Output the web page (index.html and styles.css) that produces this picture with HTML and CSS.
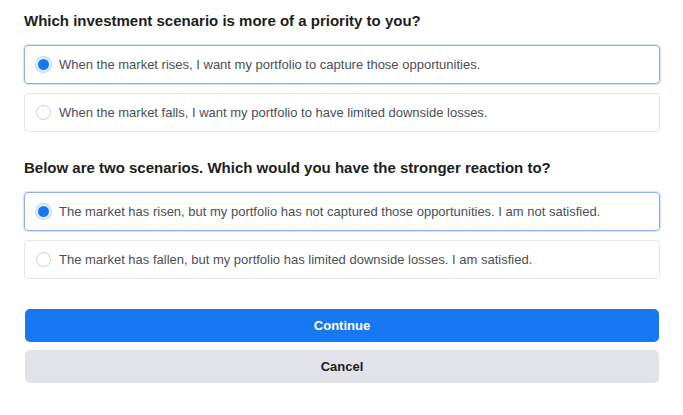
FILE: index.html
```html
<!DOCTYPE html>
<html>
  <head>
    <title>Risk Profile</title>
    <meta charset="utf-8" />
    <link rel="stylesheet" href="styles.css">
  </head>
  <body>
    <div id="survey">
      <h2 class="question">Which investment scenario is more of a priority to you?</h2>
      <label class="choice on"><span class="radio"></span>When the market rises, I want my portfolio to capture those opportunities.</label>
      <label class="choice"><span class="radio"></span>When the market falls, I want my portfolio to have limited downside losses.</label>

      <h2 class="question second">Below are two scenarios. Which would you have the stronger reaction to?</h2>
      <label class="choice on"><span class="radio"></span>The market has risen, but my portfolio has not captured those opportunities. I am not satisfied.</label>
      <label class="choice"><span class="radio"></span>The market has fallen, but my portfolio has limited downside losses. I am satisfied.</label>

      <div class="buttons">
        <a class="btn primary">Continue</a>
        <a class="btn">Cancel</a>
      </div>
    </div>
  </body>
</html>
```

FILE: styles.css
```css
body {
    margin: 0;
    background: #fff;
    font-family: "Liberation Sans", Arial, sans-serif; }

div#survey {
    width: 636px;
    margin-left: 24px;
    padding-top: 12px;
    display: flex;
    flex-direction: column; }

h2.question {
    margin: 0 0 15px 0;
    font-size: 15px;
    line-height: 18px;
    font-weight: bold;
    color: #1c1e21; }
h2.question.second {
    margin-top: 18px; }

label.choice {
    display: flex;
    align-items: center;
    height: 37px;
    margin-bottom: 9px;
    padding-left: 11px;
    border: 1px solid #e4e6eb;
    border-radius: 4px;
    font-size: 13px;
    color: #4b4f56; }
label.choice.on {
    border-color: #8cb0ea;
    box-shadow: 0 0 0 1px #d6e4fa; }

span.radio {
    width: 15px;
    height: 15px;
    box-sizing: border-box;
    border: 1px solid #ccd0d5;
    border-radius: 50%;
    margin-right: 8px;
    background: #fff; }
label.choice.on span.radio {
    border: 2px solid #e7f0fd;
    background: #1877f2;
    box-shadow: 0 0 0 1px #bcd4f5; }

div.buttons {
    margin-top: 21px;
    display: flex;
    flex-direction: column;
    gap: 8px;
    padding: 0 1px; }

a.btn {
    display: block;
    height: 33px;
    line-height: 33px;
    border-radius: 5px;
    text-align: center;
    font-size: 13px;
    font-weight: bold;
    color: #1c1e21;
    background: #e1e3e8; }
a.btn.primary {
    color: #fff;
    background: #1877f2; }
```
